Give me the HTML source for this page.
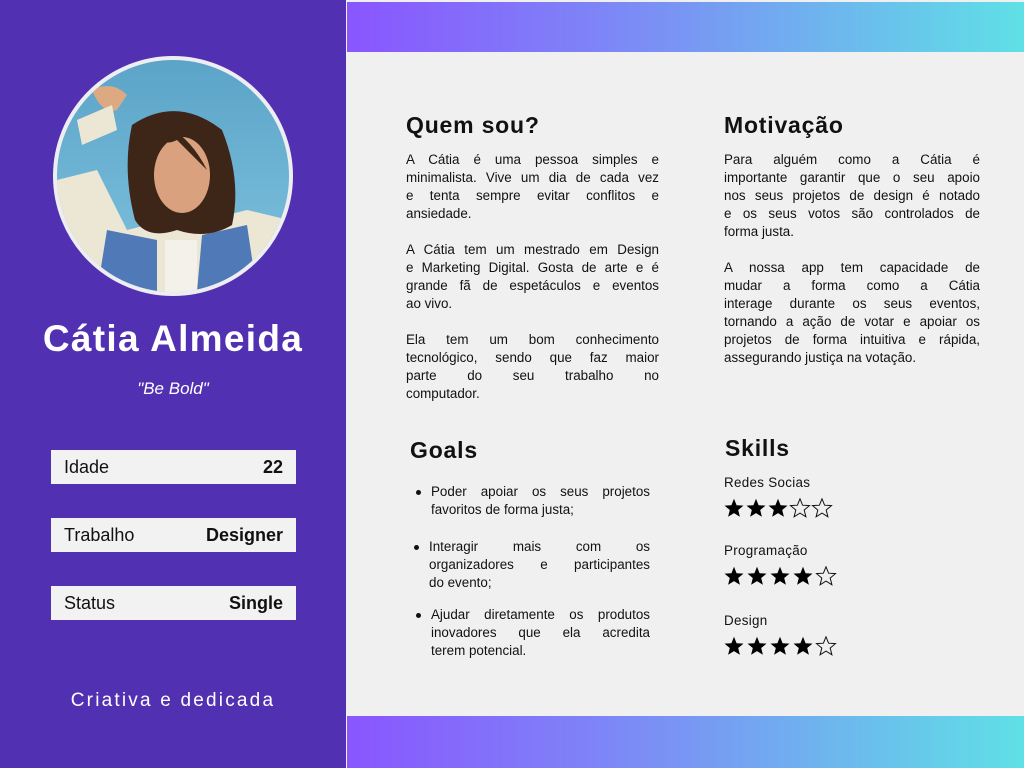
<!DOCTYPE html>
<html><head><meta charset="utf-8"><style>
*{margin:0;padding:0;box-sizing:border-box}
body{width:1024px;height:768px;position:relative;background:#f0f0f0;font-family:"Liberation Sans",sans-serif;overflow:hidden;color:#111}
.left{position:absolute;left:0;top:0;width:346px;height:768px;background:#5230b2}
.bar{position:absolute;left:347px;width:677px;background:linear-gradient(90deg,#8a55ff,#7b8ff5 45%,#5fe0e6)}
.circle{position:absolute;left:53px;top:56px;width:240px;height:240px;border-radius:50%;border:4px solid #eeeef2;overflow:hidden;background:linear-gradient(180deg,#5ba4c8,#80c2de)}
.name{position:absolute;left:0;width:346px;top:318px;text-align:center;color:#fff;font-weight:bold;font-size:37px;letter-spacing:1.3px}
.quote{position:absolute;left:0;width:346px;top:379px;text-align:center;color:#fff;font-style:italic;font-size:17px}
.row{position:absolute;left:51px;width:245px;height:34px;background:#f2f2f2;font-size:18px;display:flex;justify-content:space-between;align-items:center;padding:0 13px}
.tag{position:absolute;left:0;width:346px;top:690px;text-align:center;color:#fff;font-size:19px;letter-spacing:2.2px}
h2{position:absolute;font-size:23px;font-weight:bold;letter-spacing:0.8px}
.p{position:absolute;font-size:13.4px;line-height:18px}
.p div{text-align:justify;text-align-last:justify;white-space:nowrap;height:18px}
.p div.l{text-align-last:left}
.p .gap{height:18px}
ul{position:absolute;font-size:13.4px;line-height:18px;list-style:none}
ul li{position:relative}
ul li div{text-align:justify;text-align-last:justify;height:18px;white-space:nowrap}
ul li div.l{text-align-last:left}
ul li:before{content:"";position:absolute;left:-15px;top:7px;width:5px;height:5px;border-radius:50%;background:#111}
.sk{position:absolute;left:724px;font-size:13.4px;letter-spacing:0.3px}
.st{position:absolute;left:724px}
</style></head><body>
<svg width="0" height="0" style="position:absolute"><defs>
<path id="s" d="M10 0.8 L12.6 7.2 L19.5 7.6 L14.2 12 L15.9 18.8 L10 15.1 L4.1 18.8 L5.8 12 L0.5 7.6 L7.4 7.2Z"/>
</defs></svg>
<div class="left"></div>
<div class="bar" style="top:2px;height:50px"></div>
<div class="bar" style="top:716px;height:52px"></div>
<div class="circle"><svg width="232" height="232" viewBox="0 0 232 232">
<path d="M0 120 L40 110 L70 170 L110 160 L150 160 L190 150 L232 160 L232 232 L0 232Z" fill="#ece6d4"/>
<path d="M50 170 L100 180 L100 232 L40 232Z" fill="#4f7ab7"/>
<path d="M145 175 L190 165 L200 232 L140 232Z" fill="#4f7ab7"/>
<path d="M108 180 L140 180 L140 232 L108 232Z" fill="#f4f1ea"/>
<path d="M75 65 Q120 35 165 70 Q185 120 175 165 Q150 180 120 170 Q90 180 78 160 Q65 110 75 65Z" fill="#3d2518"/>
<ellipse cx="125" cy="115" rx="28" ry="38" fill="#d9a17e"/>
<path d="M95 60 Q130 70 150 110 L120 80 Q100 90 95 60Z" fill="#3d2518"/>
<path d="M35 30 Q55 20 70 35 L60 50 Q45 55 35 30Z" fill="#dca982"/>
<path d="M20 60 L55 45 L60 70 L25 85Z" fill="#ece6d4"/>
</svg></div>
<div class="name">Cátia Almeida</div>
<div class="quote">"Be Bold"</div>
<div class="row" style="top:450px"><span>Idade</span><b>22</b></div>
<div class="row" style="top:518px"><span>Trabalho</span><b>Designer</b></div>
<div class="row" style="top:586px"><span>Status</span><b>Single</b></div>
<div class="tag">Criativa e dedicada</div>

<h2 style="left:406px;top:112px">Quem sou?</h2>
<div class="p" style="left:406px;top:151px;width:253px">
<div>A Cátia é uma pessoa simples e</div><div>minimalista. Vive um dia de cada vez</div><div>e tenta sempre evitar conflitos e</div><div class="l">ansiedade.</div><div class="gap"></div>
<div>A Cátia tem um mestrado em Design</div><div>e Marketing Digital. Gosta de arte e é</div><div>grande fã de espetáculos e eventos</div><div class="l">ao vivo.</div><div class="gap"></div>
<div>Ela tem um bom conhecimento</div><div>tecnológico, sendo que faz maior</div><div>parte do seu trabalho no</div><div class="l">computador.</div></div>
<h2 style="left:724px;top:112px">Motivação</h2>
<div class="p" style="left:724px;top:151px;width:256px">
<div>Para alguém como a Cátia é</div><div>importante garantir que o seu apoio</div><div>nos seus projetos de design é notado</div><div>e os seus votos são controlados de</div><div class="l">forma justa.</div><div class="gap"></div>
<div>A nossa app tem capacidade de</div><div>mudar a forma como a Cátia</div><div>interage durante os seus eventos,</div><div>tornando a ação de votar e apoiar os</div><div>projetos de forma intuitiva e rápida,</div><div class="l">assegurando justiça na votação.</div></div>
<h2 style="left:410px;top:437px">Goals</h2>
<ul style="left:431px;top:483px;width:219px">
<li style="height:55px"><div>Poder apoiar os seus projetos</div><div class="l">favoritos de forma justa;</div></li>
<li style="height:68px;margin-left:-2px"><div>Interagir mais com os</div><div>organizadores e participantes</div><div class="l">do evento;</div></li>
<li><div>Ajudar diretamente os produtos</div><div>inovadores que ela acredita</div><div class="l">terem potencial.</div></li></ul>
<h2 style="left:725px;top:435px">Skills</h2>
<div class="sk" style="top:475px">Redes Socias</div>
<svg class="st" style="top:498px" width="110" height="20"><use href="#s" x="0"/><use href="#s" x="22"/><use href="#s" x="44"/><use href="#s" x="66" fill="none" stroke="#111" stroke-width="1"/><use href="#s" x="88" fill="none" stroke="#111" stroke-width="1"/></svg>
<div class="sk" style="top:543px">Programação</div>
<svg class="st" style="top:566px" width="115" height="20"><use href="#s" x="0"/><use href="#s" x="23"/><use href="#s" x="46"/><use href="#s" x="69"/><use href="#s" x="92" fill="none" stroke="#111" stroke-width="1"/></svg>
<div class="sk" style="top:613px">Design</div>
<svg class="st" style="top:636px" width="115" height="20"><use href="#s" x="0"/><use href="#s" x="23"/><use href="#s" x="46"/><use href="#s" x="69"/><use href="#s" x="92" fill="none" stroke="#111" stroke-width="1"/></svg>
</body></html>
